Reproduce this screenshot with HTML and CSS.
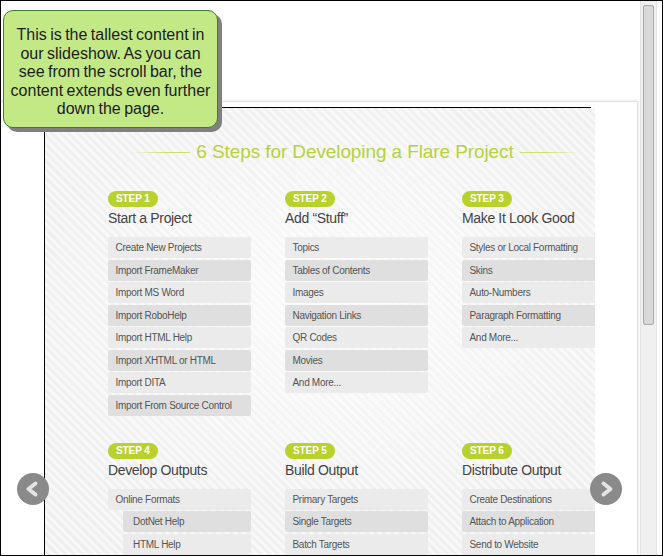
FILE: index.html
```
<!DOCTYPE html>
<html lang="en">
<head>
<meta charset="utf-8">
<title>6 Steps for Developing a Flare Project</title>
<link rel="stylesheet" href="styles.css">
</head>
<body>
<div class="window">
  <div class="viewport">
    <div class="outer">
      <div class="stage">
        <div class="topline"></div>
        <div class="panel">
          <div class="slide">
            <h1 class="title"><span>6 Steps for Developing a Flare Project</span></h1>
            <div class="steps">
              <section class="step">
                <span class="badge">STEP 1</span>
                <h2>Start a Project</h2>
                <ul class="list">
                  <li>Create New Projects</li>
                  <li>Import FrameMaker</li>
                  <li>Import MS Word</li>
                  <li>Import RoboHelp</li>
                  <li>Import HTML Help</li>
                  <li>Import XHTML or HTML</li>
                  <li>Import DITA</li>
                  <li>Import From Source Control</li>
                </ul>
              </section>
              <section class="step">
                <span class="badge">STEP 2</span>
                <h2>Add “Stuff”</h2>
                <ul class="list">
                  <li>Topics</li>
                  <li>Tables of Contents</li>
                  <li>Images</li>
                  <li>Navigation Links</li>
                  <li>QR Codes</li>
                  <li>Movies</li>
                  <li>And More...</li>
                </ul>
              </section>
              <section class="step">
                <span class="badge">STEP 3</span>
                <h2>Make It Look Good</h2>
                <ul class="list">
                  <li>Styles or Local Formatting</li>
                  <li>Skins</li>
                  <li>Auto-Numbers</li>
                  <li>Paragraph Formatting</li>
                  <li>And More...</li>
                </ul>
              </section>
              <section class="step">
                <span class="badge">STEP 4</span>
                <h2>Develop Outputs</h2>
                <ul class="list">
                  <li>Online Formats</li>
                  <li class="sub">DotNet Help</li>
                  <li class="sub">HTML Help</li>
                </ul>
              </section>
              <section class="step">
                <span class="badge">STEP 5</span>
                <h2>Build Output</h2>
                <ul class="list">
                  <li>Primary Targets</li>
                  <li>Single Targets</li>
                  <li>Batch Targets</li>
                </ul>
              </section>
              <section class="step">
                <span class="badge">STEP 6</span>
                <h2>Distribute Output</h2>
                <ul class="list">
                  <li>Create Destinations</li>
                  <li>Attach to Application</li>
                  <li>Send to Website</li>
                </ul>
              </section>
            </div>
          </div>
        </div>
      </div>
    </div>
  </div>
  <div class="scrollbar"><div class="thumb"></div></div>

  <button class="arrow prev" aria-label="Previous">
    <svg width="32" height="32" viewBox="0 0 32 32"><path d="M18.5 10.5 L11.5 16 L18.5 21.5" fill="none" stroke="#e4e4e4" stroke-width="4" stroke-linecap="round" stroke-linejoin="round"/></svg>
  </button>
  <button class="arrow next" aria-label="Next">
    <svg width="32" height="32" viewBox="0 0 32 32"><path d="M13.5 10.5 L20.5 16 L13.5 21.5" fill="none" stroke="#e4e4e4" stroke-width="4" stroke-linecap="round" stroke-linejoin="round"/></svg>
  </button>

  <div class="callout">
    <p>This is the tallest content in<br>our slideshow. As you can<br>see from the scroll bar, the<br>content extends even further<br>down the page.</p>
  </div>
</div>
</body>
</html>
```
FILE: styles.css
```
* { box-sizing: border-box; }

html, body {
  margin: 0;
  padding: 0;
  background: #fff;
}

body {
  font-family: "Liberation Sans", Arial, sans-serif;
}

.window {
  position: relative;
  width: 663px;
  height: 556px;
  border: 1px solid #000;
  background: #fff;
  display: flex;
  overflow: hidden;
}

.viewport {
  width: 639px;
  height: 100%;
  overflow: hidden;
  flex: none;
}

.outer {
  margin-top: 100px;
  width: 637px;
  height: 500px;
  border-top: 1px solid #e2e2e2;
  border-right: 1px solid #e2e2e2;
  box-shadow: 0 -1px 2px rgba(0, 0, 0, 0.05), 1px 0 2px rgba(0, 0, 0, 0.05);
  padding-top: 5px;
  padding-left: 43px;
}

.stage {
  border-left: 1px solid #000;
  width: 551px;
}

.topline {
  width: 546px;
  height: 1px;
  background: #000;
}

.panel {
  width: 550px;
  height: 470px;
  overflow: hidden;
  background:
    radial-gradient(ellipse 55% 45% at 52% 42%, rgba(255,255,255,0.7), rgba(255,255,255,0)),
    repeating-linear-gradient(45deg, #f0f0f0 0 3px, #f8f8f8 3px 6px);
}

.slide {
  width: 620px;
}

.title {
  margin: 0;
  padding-top: 33px;
  height: 55px;
  display: flex;
  justify-content: center;
  align-items: center;
  gap: 6px;
  font-size: 19px;
  line-height: 22px;
  font-weight: normal;
  color: #b7d23a;
  letter-spacing: -0.1px;
  white-space: nowrap;
}

.title::before,
.title::after {
  content: "";
  width: 60px;
  height: 1px;
  margin-top: 1px;
}

.title::before {
  background: linear-gradient(to right, rgba(200,222,110,0), #c9df72 60%);
}

.title::after {
  background: linear-gradient(to left, rgba(200,222,110,0), #c9df72 60%);
}

.steps {
  margin-top: 28px;
  padding-left: 63px;
  display: grid;
  grid-template-columns: repeat(3, 143px);
  column-gap: 34px;
  row-gap: 27px;
}

.step {
  display: flex;
  flex-direction: column;
  align-items: flex-start;
}

.badge {
  display: inline-block;
  height: 16px;
  line-height: 16px;
  padding: 0 8px;
  border-radius: 8px;
  background: #b8d12c;
  color: #fff;
  font-size: 10px;
  font-weight: bold;
  letter-spacing: -0.1px;
}

.step h2 {
  margin: 3px 0 0;
  font-size: 14px;
  line-height: 17px;
  font-weight: normal;
  color: #444;
  letter-spacing: -0.35px;
  white-space: nowrap;
}

.list {
  margin: 10px 0 0;
  padding: 0;
  list-style: none;
  display: flex;
  flex-direction: column;
  gap: 1.5px;
  width: 143px;
}

.list li {
  height: 21px;
  line-height: 21px;
  padding-left: 7.5px;
  font-size: 10px;
  color: #555;
  letter-spacing: -0.3px;
  background: #ebebeb;
  border-radius: 2px;
  white-space: nowrap;
}

.list li:nth-child(even) {
  background: #dfdfdf;
}

.list li.sub {
  margin-left: 15px;
  padding-left: 10px;
}

.scrollbar {
  width: 17px;
  height: 100%;
  flex: none;
  background: #f0f0f0;
  border-left: 1px solid #e3e3e3;
  border-right: 1px solid #e3e3e3;
  padding: 4px 2px 0;
}

.thumb {
  height: 320px;
  background: #d8d8d8;
  border: 1px solid #a9a9a9;
  border-radius: 2px;
}

.arrow {
  position: absolute;
  top: 472px;
  width: 32px;
  height: 32px;
  padding: 0;
  border: 0;
  border-radius: 50%;
  background: #8a8a8a;
  display: flex;
  align-items: center;
  justify-content: center;
}

.arrow.prev { left: 16px; }
.arrow.next { left: 589px; }

.callout {
  position: absolute;
  left: 2px;
  top: 9px;
  width: 215px;
  height: 118px;
  background: #c3e987;
  border: 1.5px solid #427a33;
  border-radius: 10px;
  box-shadow: 4px 4px 0 #808080;
  padding-top: 15px;
}

.callout p {
  margin: 0;
  text-align: center;
  font-size: 16px;
  line-height: 18.5px;
  color: #1c1c1c;
  word-spacing: -1px;
  white-space: nowrap;
}
```
